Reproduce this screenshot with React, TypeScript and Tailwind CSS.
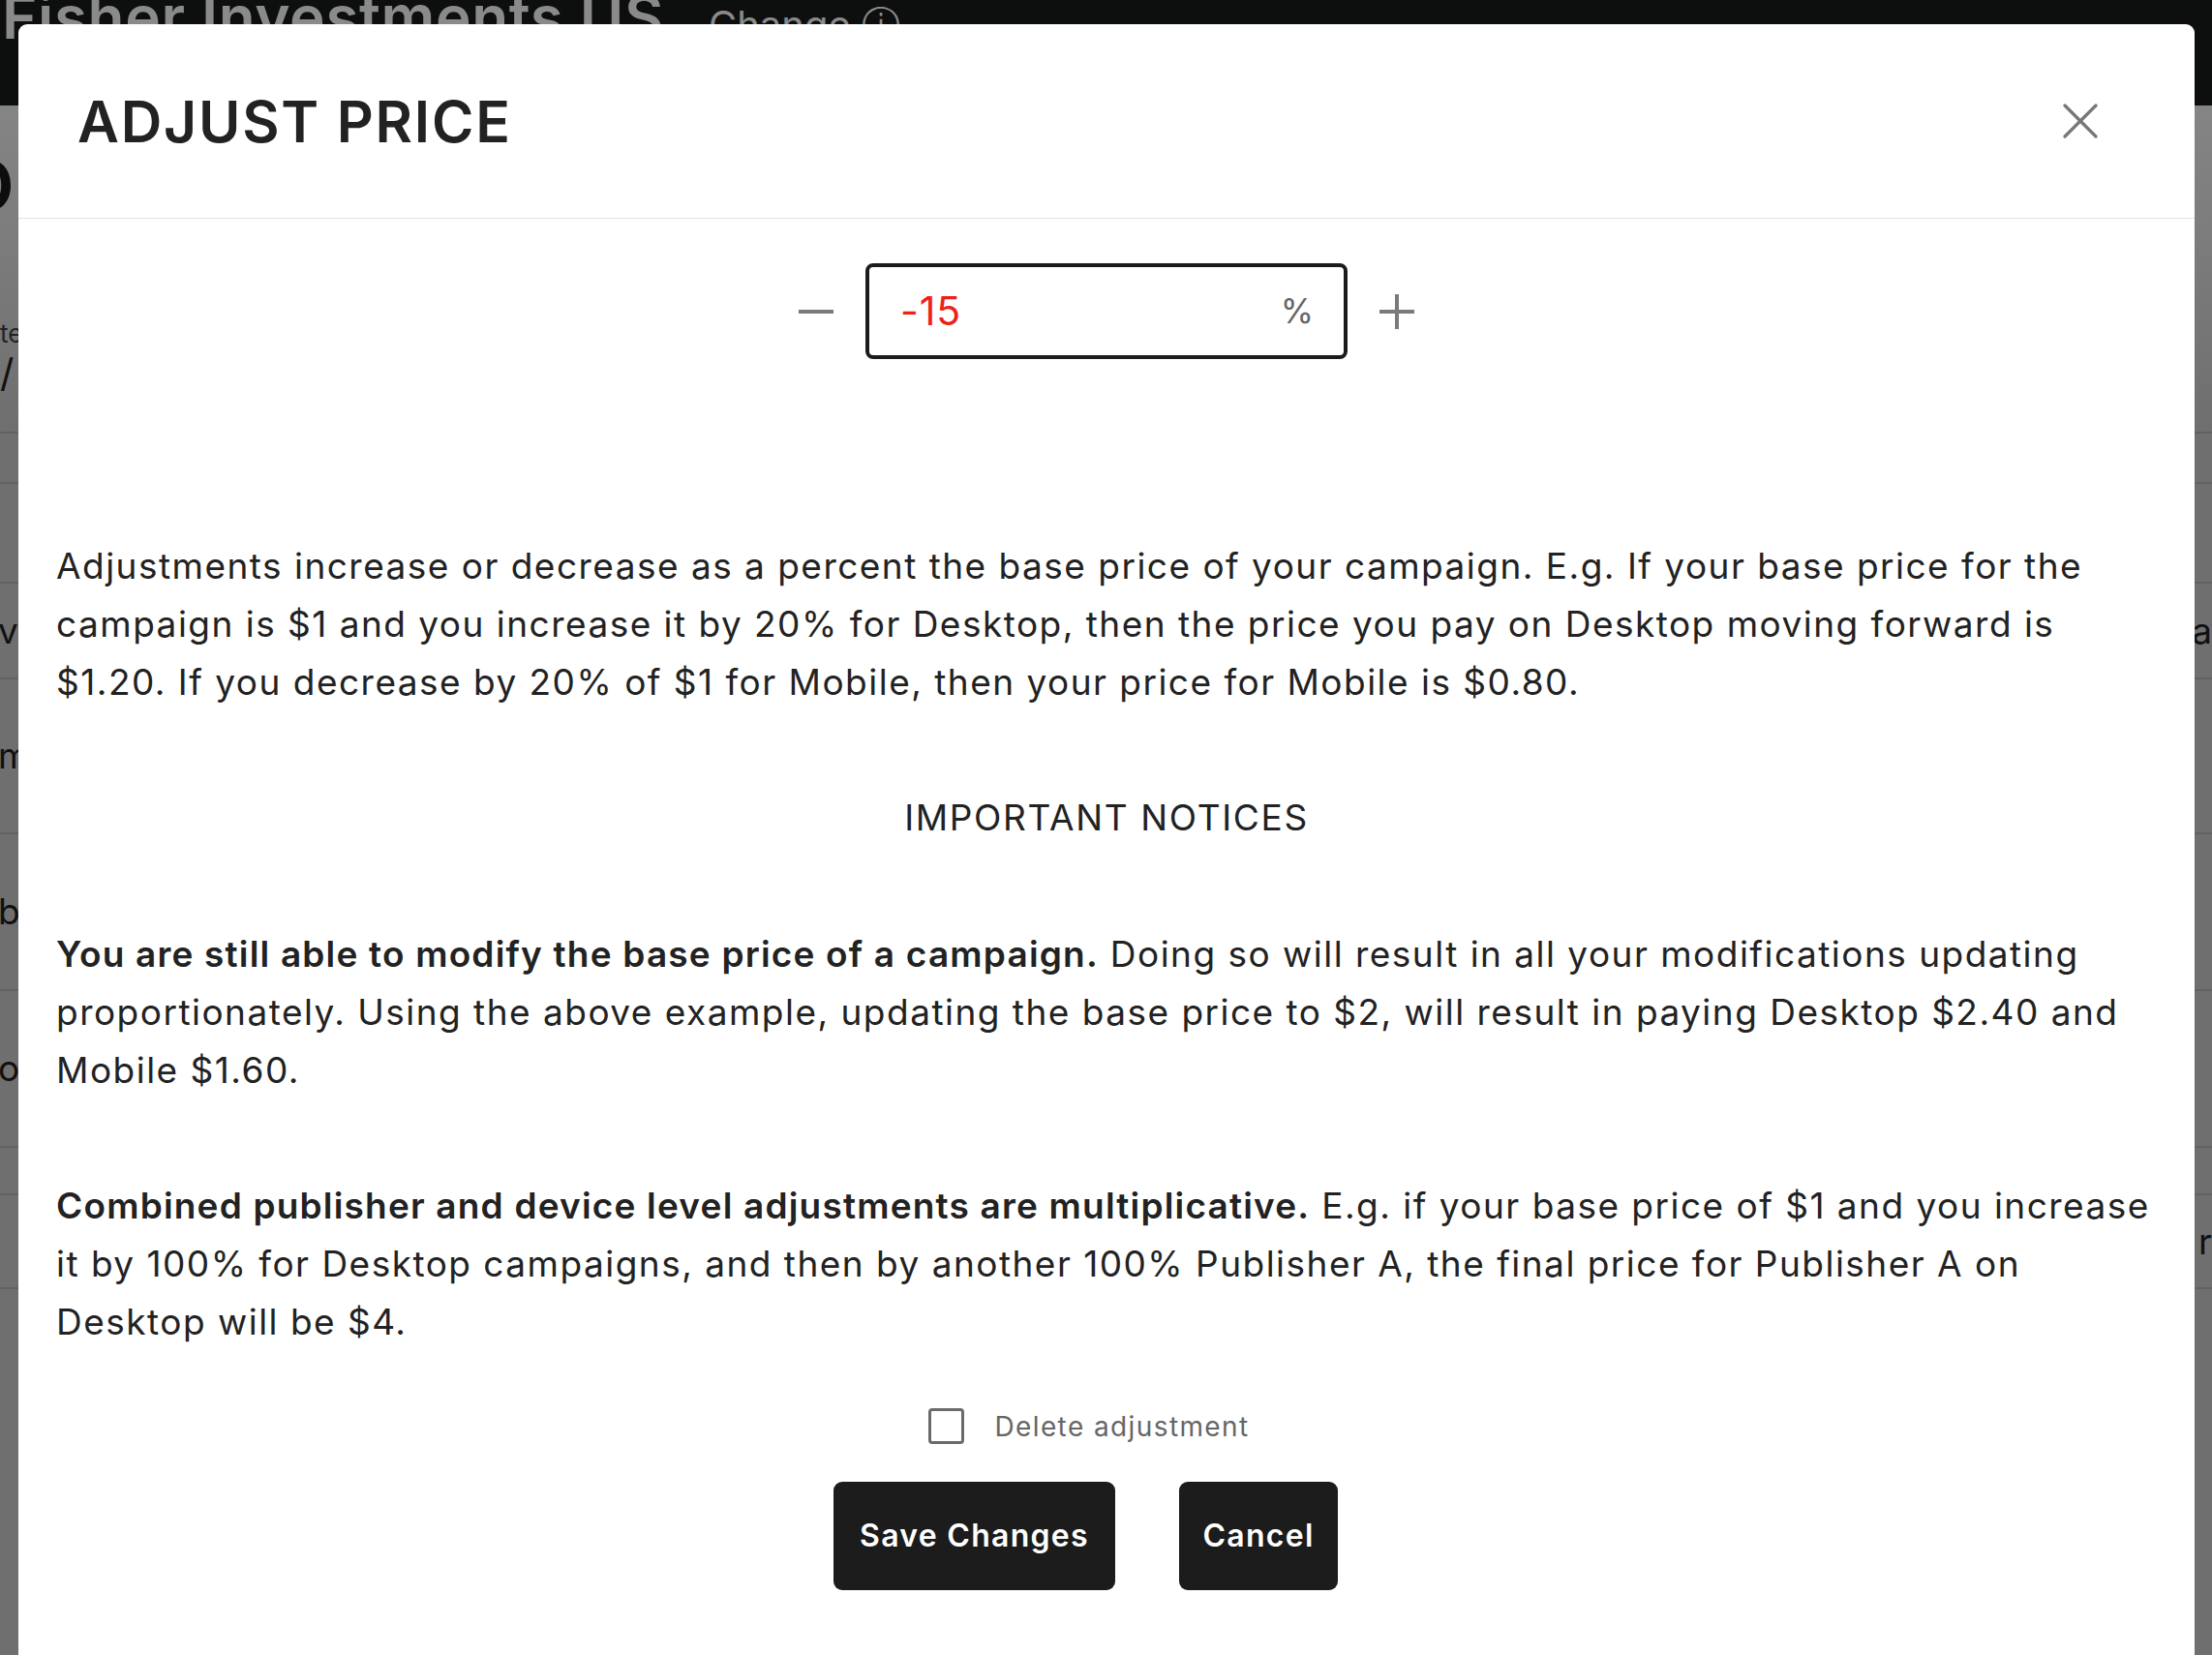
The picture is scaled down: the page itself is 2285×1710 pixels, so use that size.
import { useState } from 'react';

// Rows of the dimmed page that peek out on both sides of the dialog.
const backRows = [
  { h: 'h-[52px]', left: '', right: '' },
  { h: 'h-[103px]', left: '', right: '' },
  { h: 'h-[99px]', left: 'vi', right: 'a' },
  { h: 'h-[160px]', left: 'm', right: '' },
  { h: 'h-[162px]', left: 'b', right: '' },
  { h: 'h-[162px]', left: 'ol', right: '' },
  { h: 'h-[49px]', left: '', right: '' },
  { h: 'h-[97px]', left: '', right: 'r' },
];

function BackPage() {
  return (
    <div className="flex h-full flex-col bg-[#6f6f6f]">
      <div className="flex h-[109px] shrink-0 items-start gap-[46px] bg-[#0d0e0e] pl-[2px]">
        <span className="-mt-[13px] text-[62px] leading-none font-semibold tracking-[0.01em] text-[#8a8a8a]">
          Fisher Investments US
        </span>
        <span className="mt-[6px] text-[40px] leading-none text-[#8a8a8a]">Change ⓘ</span>
      </div>
      <div className="flex h-[339px] shrink-0 flex-col border-b-2 border-[#626262] bg-gradient-to-b from-[#858585] to-[#6f6f6f]">
        <span className="mt-[44px] -ml-[40px] h-[73px] text-[76px] leading-none font-semibold text-[#0d0d0d]">D</span>
        <span className="mt-[102px] text-[26px] leading-[34px] text-[#222]">te</span>
        <span className="mt-[4px] text-[40px] leading-[40px] text-[#111]">/</span>
      </div>
      {backRows.map((r, i) => (
        <div key={i} className={`flex shrink-0 items-center justify-between border-b-2 border-[#626262] ${r.h}`}>
          <span className="-ml-[2px] text-[37px] text-[#111]">{r.left}</span>
          <span className="text-[37px] text-[#111]">{r.right}</span>
        </div>
      ))}
    </div>
  );
}

function CloseIcon() {
  return (
    <svg width="36" height="36" viewBox="0 0 36 36" fill="none" stroke="#777" strokeWidth="3.2" strokeLinecap="round">
      <line x1="2" y1="2" x2="34" y2="34" />
      <line x1="34" y1="2" x2="2" y2="34" />
    </svg>
  );
}

export default function App() {
  const [value] = useState('-15');
  const [remove, setRemove] = useState(false);

  return (
    <div className="relative h-[1710px] w-full overflow-hidden font-[Inter,sans-serif]">
      <BackPage />

      <div
        role="dialog"
        aria-modal="true"
        className="absolute top-[25px] left-[19px] flex h-[1720px] w-[2248px] flex-col rounded-t-[9px] bg-white text-[#222]"
      >
        <header className="flex h-[201px] shrink-0 items-center justify-between border-b border-[#dde2ea] pr-[100px] pl-[61px]">
          <h2 className="text-[59px] leading-none font-semibold tracking-[0.03em] text-[#222]">ADJUST PRICE</h2>
          <button type="button" aria-label="Close" className="flex h-[36px] w-[36px] items-center justify-center">
            <CloseIcon />
          </button>
        </header>

        <div className="flex flex-col px-[39px] pt-[46px]">
          <div className="flex h-[99px] items-center justify-center gap-[33px]">
            <button type="button" aria-label="Decrease" className="flex h-[36px] w-[36px] items-center">
              <span className="h-[4px] w-[36px] bg-[#7a7a7a]" />
            </button>
            <div className="flex h-[99px] w-[498px] items-center rounded-[8px] border-4 border-[#1b1b1b] pr-[31px] pl-[32px]">
              <input
                readOnly
                value={value}
                className="w-full bg-transparent text-[41px] tracking-[0.02em] text-[#ee2118] outline-none"
              />
              <span className="text-[35px] text-[#666]">%</span>
            </div>
            <button type="button" aria-label="Increase" className="relative flex h-[36px] w-[36px] items-center justify-center">
              <span className="absolute h-[4px] w-[36px] bg-[#7a7a7a]" />
              <span className="absolute h-[36px] w-[4px] bg-[#7a7a7a]" />
            </button>
          </div>

          <p className="mt-[184px] text-[37px] leading-[60px] tracking-[0.04em] whitespace-nowrap">
            Adjustments increase or decrease as a percent the base price of your campaign. E.g. If your base price for the
            <br />
            campaign is $1 and you increase it by 20% for Desktop, then the price you pay on Desktop moving forward is
            <br />
            $1.20. If you decrease by 20% of $1 for Mobile, then your price for Mobile is $0.80.
          </p>

          <h3 className="mt-[80px] text-center text-[37px] leading-[60px] font-normal tracking-[0.045em]">
            IMPORTANT NOTICES
          </h3>

          <p className="mt-[81px] text-[37px] leading-[60px] tracking-[0.04em] whitespace-nowrap">
            <strong className="font-semibold tracking-[0.032em]">
              You are still able to modify the base price of a campaign.
            </strong>{' '}
            Doing so will result in all your modifications updating
            <br />
            proportionately. Using the above example, updating the base price to $2, will result in paying Desktop $2.40 and
            <br />
            Mobile $1.60.
          </p>

          <p className="mt-[80px] text-[37px] leading-[60px] tracking-[0.04em] whitespace-nowrap">
            <strong className="font-semibold tracking-[0.032em]">
              Combined publisher and device level adjustments are multiplicative.
            </strong>{' '}
            E.g. if your base price of $1 and you increase
            <br />
            it by 100% for Desktop campaigns, and then by another 100% Publisher A, the final price for Publisher A on
            <br />
            Desktop will be $4.
          </p>

          <label className="mt-[59px] flex h-[37px] cursor-pointer items-center justify-center gap-[31px] pr-[36px]">
            <span
              onClick={() => setRemove(!remove)}
              className={`h-[37px] w-[37px] rounded-[4px] border-[3px] border-[#6b6b6b] ${remove ? 'bg-[#6b6b6b]' : 'bg-white'}`}
            />
            <span className="text-[28px] leading-none tracking-[0.05em] text-[#666]">Delete adjustment</span>
          </label>

          <div className="mt-[39px] flex justify-center gap-[66px] pr-[43px]">
            <button
              type="button"
              className="h-[112px] w-[291px] rounded-[9px] bg-[#1b1c1b] text-[32px] font-semibold tracking-[0.04em] text-white"
            >
              Save Changes
            </button>
            <button
              type="button"
              className="h-[112px] w-[164px] rounded-[9px] bg-[#1b1c1b] text-[32px] font-semibold tracking-[0.04em] text-white"
            >
              Cancel
            </button>
          </div>
        </div>
      </div>
    </div>
  );
}
